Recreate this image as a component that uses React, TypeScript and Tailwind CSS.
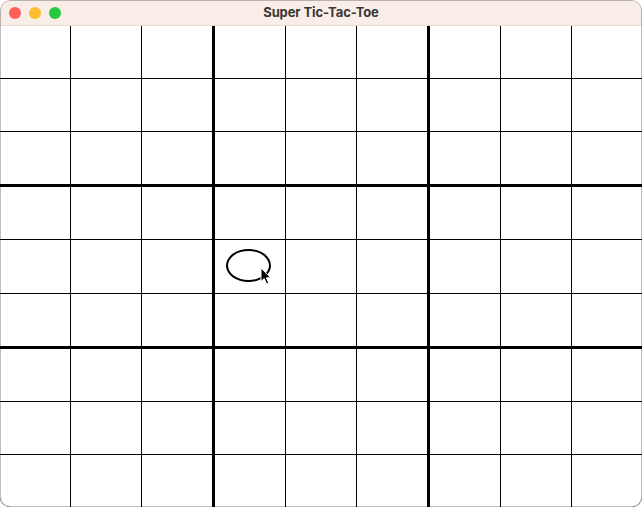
import { Fragment } from 'react';

type Mark = 'X' | 'O' | null;

// 9 blocks x 9 cells, only one O placed so far
const board: Mark[][] = Array.from({ length: 9 }, () => Array<Mark>(9).fill(null));
board[4][3] = 'O'; // center block, middle-left cell

function Cursor() {
  return (
    <svg
      width="12"
      height="18"
      viewBox="0 0 12 18"
      className="absolute left-[45px] top-[27px] pointer-events-none"
    >
      <path
        d="M1 1 L1 14.5 L4.2 11.6 L6.6 17 L8.7 16.1 L6.4 10.8 L10.6 10.8 Z"
        fill="#000"
        stroke="#fff"
        strokeWidth="1"
        strokeLinejoin="round"
      />
    </svg>
  );
}

function Cell({ mark, cursor }: { mark: Mark; cursor?: boolean }) {
  return (
    <div className="relative bg-white flex items-center justify-center">
      {mark === 'O' && (
        <div className="w-[45px] h-[33px] rounded-[50%] border-2 border-black -translate-x-[2px] -translate-y-[1px]" />
      )}
      {mark === 'X' && <span className="text-3xl font-bold">X</span>}
      {cursor && <Cursor />}
    </div>
  );
}

export default function App() {
  return (
    <div className="w-[642px] h-[507px] relative bg-white overflow-hidden rounded-[10px] flex flex-col font-['Inter','Liberation_Sans',sans-serif]">
      {/* title bar */}
      <div className="h-[26px] shrink-0 bg-[#f8ede7] border-b border-[#e4dcd7] flex items-center relative">
        <div className="flex gap-[8px] pl-[9px]">
          <span className="w-[12px] h-[12px] rounded-full bg-[#fe5f57]" />
          <span className="w-[12px] h-[12px] rounded-full bg-[#febc2e]" />
          <span className="w-[12px] h-[12px] rounded-full bg-[#28c840]" />
        </div>
        <div className="absolute inset-0 flex items-center justify-center text-[13px] font-bold text-[#3b3735] tracking-[-0.1px]">
          Super Tic-Tac-Toe
        </div>
      </div>

      {/* board */}
      <div className="flex-1 grid grid-cols-3 grid-rows-3 gap-[3px] bg-black">
        {board.map((block, b) => (
          <div key={b} className="grid grid-cols-3 grid-rows-3 gap-px bg-black">
            {block.map((mark, c) => (
              <Fragment key={c}>
                <Cell mark={mark} cursor={b === 4 && c === 3} />
              </Fragment>
            ))}
          </div>
        ))}
      </div>

      {/* window frame */}
      <div className="absolute inset-0 rounded-[10px] border border-black/25 pointer-events-none" />
    </div>
  );
}
